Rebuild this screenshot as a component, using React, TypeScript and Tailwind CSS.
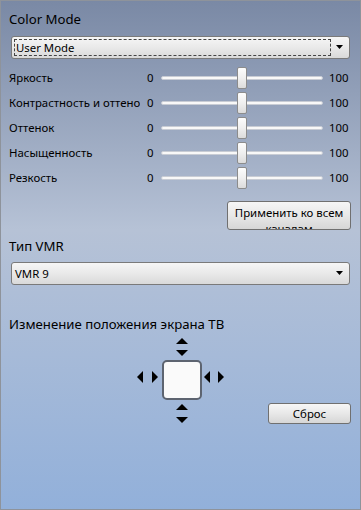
import React from "react";

const font = { fontFamily: '"Segoe UI", "Noto Sans", "Open Sans", sans-serif' };

function Combo({ text, focus }: { text: string; focus?: boolean }) {
  return (
    <div className="mx-[10px] h-[23px] rounded-[3px] border border-[#7a7a7a] bg-gradient-to-b from-[#f6f6f6] via-[#e9e9e9] to-[#d9d9d9] relative flex items-center">
      <div className={`ml-[2px] h-[17px] w-[317px] flex items-center pl-[1px] ${focus ? "border border-dashed border-[#444]" : ""}`}>
        <span className="text-[11.4px] text-[#000] leading-none">{text}</span>
      </div>
      <svg className="absolute right-[6px] top-[8px]" width="7" height="5" viewBox="0 0 7 5">
        <path d="M0 0h7L3.5 4z" fill="#000" />
      </svg>
    </div>
  );
}

function SliderRow({ label }: { label: string }) {
  return (
    <div className="h-[25px] flex items-center text-[11.4px] text-[#000]">
      <div className="w-[139px] pl-[8px] overflow-hidden whitespace-nowrap">{label}</div>
      <div className="w-[21px] pl-[7px]">0</div>
      <div className="relative w-[162px] h-[22px] flex items-center">
        <div className="w-full h-[4px] rounded-full bg-[#f8f8f8] border border-[#c8ccd4]" />
        <div className="absolute left-[76px] top-0 w-[10px] h-[22px] rounded-[2px] border border-[#8c8c8c] bg-gradient-to-b from-[#fdfdfd] via-[#efefef] to-[#dcdcdc]" />
      </div>
      <div className="pl-[6px]">100</div>
    </div>
  );
}

function Tri({ dir }: { dir: "up" | "down" | "left" | "right" }) {
  const d = {
    up: "M0 6L6 0L12 6z",
    down: "M0 0h12L6 6z",
    left: "M6 0v12L0 6z",
    right: "M0 0v12l6-6z",
  }[dir];
  const vert = dir === "up" || dir === "down";
  const w = vert ? 12 : 6;
  const h = vert ? 6 : 12;
  return (
    <svg width={w} height={h} viewBox={`0 0 ${w} ${h}`} className="block">
      <path d={d} fill="#000" />
    </svg>
  );
}

export default function App() {
  return (
    <div
      style={font}
      className="w-[361px] h-[510px] border border-[#8e939b] bg-gradient-to-b from-[#7a89a5] via-[#b6c2d6] via-45% to-[#92b0da] overflow-hidden"
    >
      <div className="pt-[8px] pl-[8px] text-[13.2px] text-[#000] leading-[20px]">Color Mode</div>
      <div className="mt-[7px]">
        <Combo text="User Mode" focus />
      </div>
      <div className="mt-[6px]">
        <SliderRow label="Яркость" />
        <SliderRow label="Контрастность и оттенок" />
        <SliderRow label="Оттенок" />
        <SliderRow label="Насыщенность" />
        <SliderRow label="Резкость" />
      </div>
      <div className="flex justify-end pr-[9px] mt-[11px]">
        <div className="w-[124px] h-[29px] rounded-[3px] border border-[#707070] bg-gradient-to-b from-[#f6f6f6] via-[#e8e8e8] to-[#d6d6d6] overflow-hidden text-center text-[11.4px] leading-[16px] pt-[3px] text-[#000]">
          Применить ко всем каналам
        </div>
      </div>
      <div className="pt-[6px] pl-[8px] text-[13.2px] leading-[20px] text-[#000]">Тип VMR</div>
      <div className="mt-[6px]">
        <Combo text="VMR 9" />
      </div>
      <div className="mt-[29px] pl-[8px] text-[13.2px] leading-[20px] text-[#000]">Изменение положения экрана ТВ</div>
      <div className="flex items-start pl-[136px]">
        <div className="flex flex-col w-[87px] pt-[4px]">
          <div className="ml-[39px]"><Tri dir="up" /></div>
          <div className="ml-[39px] mt-[6px]"><Tri dir="down" /></div>
          <div className="flex items-start mt-[4px]">
            <div className="mt-[11px]"><Tri dir="left" /></div>
            <div className="mt-[11px] ml-[9px]"><Tri dir="right" /></div>
            <div className="ml-[4px] w-[40px] h-[40px] rounded-[5px] border-2 border-[#5d6470] bg-[#fafafa]" />
            <div className="mt-[11px] ml-[2px]"><Tri dir="left" /></div>
            <div className="mt-[11px] ml-[8px]"><Tri dir="right" /></div>
          </div>
          <div className="ml-[39px] mt-[4px]"><Tri dir="up" /></div>
          <div className="ml-[39px] mt-[7px]"><Tri dir="down" /></div>
        </div>
        <div className="ml-[44px] mt-[69px] w-[83px] h-[21px] rounded-[3px] border border-[#707070] bg-gradient-to-b from-[#f6f6f6] via-[#e8e8e8] to-[#d6d6d6] flex items-center justify-center text-[11.4px] text-[#000]">
          Сброс
        </div>
      </div>
    </div>
  );
}
